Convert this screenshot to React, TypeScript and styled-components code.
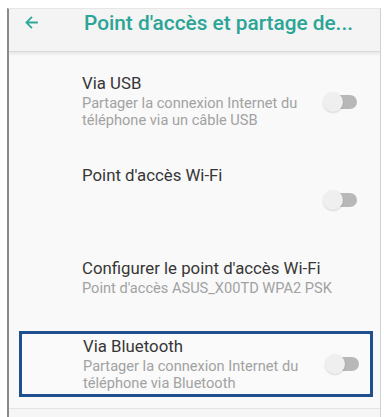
import React from 'react'
import styled, { createGlobalStyle } from 'styled-components'

const GlobalStyle = createGlobalStyle`
  body {
    margin: 0;
    background: #ffffff;
    font-family: Roboto, "Liberation Sans", sans-serif;
  }
`

type Item = {
  title: string
  subtitle?: string
  toggle?: boolean
  height: number
  switchTop?: number
  highlight?: boolean
}

const items: Item[] = [
  { title: 'Via USB', subtitle: 'Partager la connexion Internet du téléphone via un câble USB', toggle: true, height: 92, switchTop: 19 },
  { title: "Point d'accès Wi-Fi", toggle: true, height: 93, switchTop: 25 },
  { title: "Configurer le point d'accès Wi-Fi", subtitle: "Point d'accès ASUS_X00TD WPA2 PSK", height: 73 },
  { title: 'Via Bluetooth', subtitle: 'Partager la connexion Internet du téléphone via Bluetooth', toggle: true, height: 66, switchTop: 18, highlight: true },
]

const Toggle = ({ top }: { top: number }) => (
  <Switch $top={top}>
    <Track />
    <Thumb />
  </Switch>
)

const App: React.FC = () => {
  return (
    <Frame>
      <GlobalStyle />
      <Header>
        <BackArrow viewBox="0 0 24 24">
          <path d="M20 10.8H8.3l5.1-5.1L11.7 4 4 12l7.7 8 1.7-1.7-5.1-5.1H20z" />
        </BackArrow>
        <Title>Point d'accès et partage de...</Title>
      </Header>
      <List>
        {items.map((item) => (
          <Row key={item.title} $height={item.height} $highlight={item.highlight}>
            <Texts>
              <RowTitle>{item.title}</RowTitle>
              {item.subtitle && <RowSub $wide={!item.toggle}>{item.subtitle}</RowSub>}
            </Texts>
            {item.toggle && <Toggle top={item.switchTop || 0} />}
          </Row>
        ))}
        <Bottom />
      </List>
    </Frame>
  )
}

const Frame: any = styled.div`
  margin: 8px 3px 0 7px;
  border-left: 2px solid #8a8a8a;
  border-right: 1px solid #d0d0d0;
  border-top: 1px solid #e6e6e6;
  height: 409px;
  background: #f9f9f9;
  display: flex;
  flex-direction: column;
  overflow: hidden;
`

const Header: any = styled.div`
  height: 43px;
  box-sizing: border-box;
  padding-bottom: 15px;
  flex-shrink: 0;
  display: flex;
  align-items: center;
  background: #f4f4f4;
  border-bottom: 1px solid #dadada;
  box-shadow: 0 2px 3px rgba(0, 0, 0, 0.08);
`

const BackArrow: any = styled.svg`
  width: 19px;
  height: 19px;
  fill: #2ea899;
  margin-left: 13px;
  flex-shrink: 0;
`

const Title: any = styled.h1`
  margin: 0 0 0 43px;
  font-size: 20.8px;
  font-weight: 500;
  color: #2aa596;
  white-space: nowrap;
`

const List: any = styled.div`
  display: flex;
  flex-direction: column;
  padding-top: 21px;
  flex: 1;
`

const Row: any = styled.div`
  height: ${(p: any) => p.$height}px;
  flex-shrink: 0;
  display: flex;
  align-items: flex-start;
  padding-left: 73px;
  padding-right: 22px;
  box-sizing: border-box;
  ${(p: any) =>
    p.$highlight &&
    `
    margin: 0 7px 0 10px;
    padding-left: 61px;
    padding-right: 10px;
    padding-top: 2px;
    border: 3px solid #1f4f8f;
    background: #fafafa;
    overflow: hidden;
  `}
`

const Texts: any = styled.div`
  flex: 1;
  display: flex;
  flex-direction: column;
`

const RowTitle: any = styled.div`
  font-size: 16.8px;
  line-height: 20px;
  color: #363636;
`

const RowSub: any = styled.div`
  font-size: 14.6px;
  line-height: 17px;
  color: #a2a2a2;
  margin-top: 2px;
  max-width: ${(p: any) => (p.$wide ? '300px' : '232px')};
`

const Switch: any = styled.div`
  position: relative;
  width: 35px;
  height: 20px;
  margin-top: ${(p: any) => p.$top}px;
  flex-shrink: 0;
`

const Track: any = styled.div`
  position: absolute;
  left: 7px;
  top: 3px;
  width: 27px;
  height: 14px;
  border-radius: 7px;
  background: #b8b8b8;
`

const Thumb: any = styled.div`
  position: absolute;
  left: 0;
  top: 0;
  width: 20px;
  height: 20px;
  border-radius: 50%;
  background: #efefef;
  box-shadow: 0 1px 2px rgba(0, 0, 0, 0.15);
`

const Bottom: any = styled.div`
  margin-top: 11px;
  border-top: 1px solid #e4e4e4;
  flex: 1;
  background: #f6f6f6;
`

export default App
